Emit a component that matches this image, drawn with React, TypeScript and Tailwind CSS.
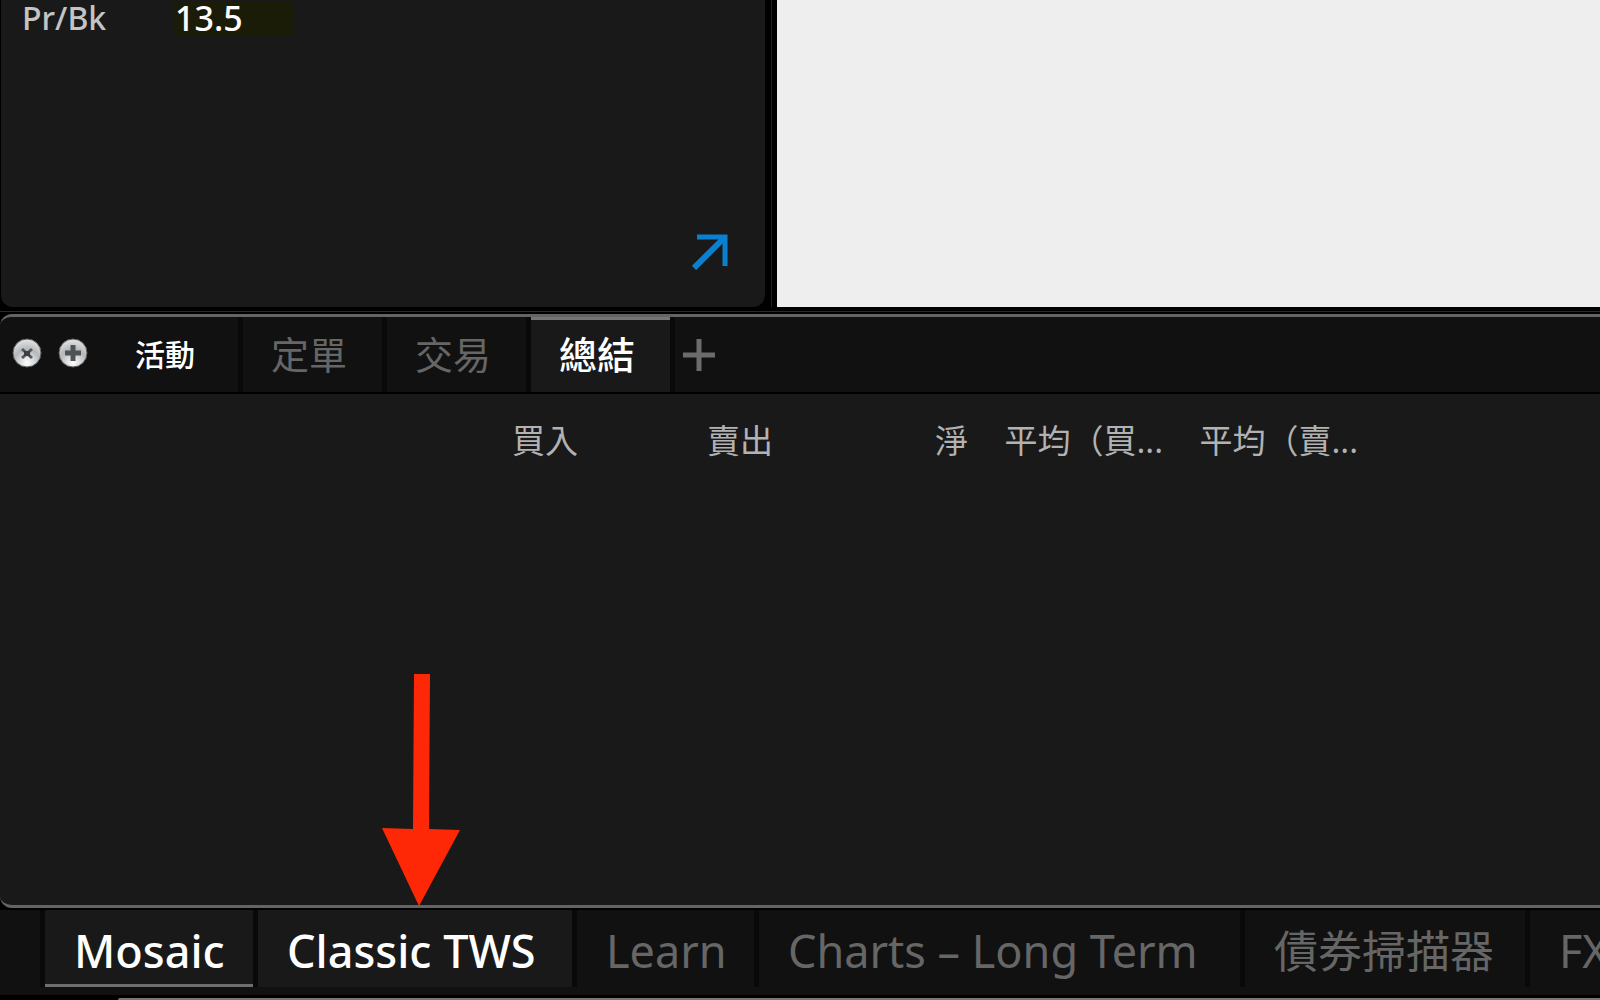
import React from "react";
import { clsx } from "clsx";

interface Tab {
  label: string;
  size?: string;
  state?: "active" | "open";
}

const activityTabs: Tab[] = [
  { label: "定單" },
  { label: "交易" },
  { label: "總結", state: "active" },
];

const layoutTabs: Tab[] = [
  { label: "Mosaic", size: "w-[213px] text-[45px]", state: "active" },
  { label: "Classic TWS", size: "w-[319px] text-[45px]", state: "open" },
  { label: "Learn", size: "w-[182px] text-[45px]" },
  { label: "Charts – Long Term", size: "w-[486px] text-[45px]" },
  { label: "債券掃描器", size: "w-[285px] text-[44px]" },
  { label: "FX", size: "w-[285px] text-[45px]" },
];

const columns = ["買入", "賣出", "淨", "平均（買...", "平均（賣..."];

export default function App() {
  return (
    <div className="flex min-h-screen flex-col overflow-hidden bg-black font-['Noto_Sans','Noto_Sans_CJK_TC',sans-serif] text-white">
      <TopPanels />
      <ActivityPanel />
      <LayoutBar />
    </div>
  );
}

function TopPanels() {
  return (
    <div className="flex h-[312px] shrink-0 border-b border-[#2a2a2a] pb-1">
      <section className="ml-px flex w-[764px] shrink-0 flex-col justify-between rounded-b-xl bg-[#191919]">
        <dl className="flex h-9 items-center pl-[21px]">
          <dt className="w-[151px] text-[32px] leading-9 font-medium text-[#c4c4c4]">Pr/Bk</dt>
          <dd className="w-[121px] bg-[#1b1c08] pl-[2px] text-[34px] leading-[34px] font-medium">13.5</dd>
        </dl>
        <button aria-label="Expand" className="mr-[37px] mb-[37px] self-end">
          <svg width="36" height="36" viewBox="0 0 36 36" fill="none" stroke="#0a80d0">
            <path d="M5 3H33V32" strokeWidth="5" />
            <path d="M2 34L32 4" strokeWidth="6" />
          </svg>
        </button>
      </section>
      <div className="mr-[5px] w-[7px] border-r border-[#1f1f1f]" />
      <section className="flex-1 bg-[#eeeeee]" />
    </div>
  );
}

function ActivityPanel() {
  return (
    <section className="-mr-4 mt-0.5 flex flex-1 flex-col overflow-hidden rounded-l-xl border-y-[3px] border-[#646464] bg-[#191919]">
      <header className="flex h-[77px] shrink-0 border-b-2 border-black bg-[#111111]">
        <div className="flex w-[238px] items-center gap-4 pb-1 pl-3">
          <button aria-label="Close">
            <PanelIcon>
              <path d="M10 11L20 20M20 11L10 20" stroke="#55585a" strokeWidth="3" />
              <path d="M12 15.5H18" stroke="#3c3e40" strokeWidth="5" />
            </PanelIcon>
          </button>
          <button aria-label="Add">
            <PanelIcon>
              <path d="M15 7V23M7 15H23" stroke="#505355" strokeWidth="5" />
            </PanelIcon>
          </button>
          <h2 className="mt-1 ml-[31px] text-[30px] leading-9 font-medium">活動</h2>
        </div>
        <nav className="flex">
          {activityTabs.map((tab) => (
            <button
              key={tab.label}
              className={clsx(
                "w-[144px] border-l-[5px] border-[#090909] pl-7 text-left text-[38px] leading-[73px]",
                tab.state === "active"
                  ? "bg-[#191919] font-medium text-white shadow-[inset_0_3px_0_#747474]"
                  : "text-[#666666]"
              )}
            >
              {tab.label}
            </button>
          ))}
          <button aria-label="Add tab" className="border-l-[5px] border-[#090909] pl-2">
            <svg width="32" height="32" viewBox="0 0 32 32" stroke="#6c6c6c" strokeWidth="5">
              <path d="M16 0V32M0 16H32" />
            </svg>
          </button>
        </nav>
      </header>

      <div className="relative flex-1">
        <table className="mt-6 w-full table-fixed text-[33px] leading-[46px] text-[#b2b2b2]">
          <thead>
            <tr>
              <th className="w-[383px]" />
              {columns.map((name) => (
                <th key={name} scope="col" className="w-[195px] text-right font-normal whitespace-nowrap">
                  {name}
                </th>
              ))}
              <th />
            </tr>
          </thead>
        </table>

        {/* Pointer to the Classic TWS tab */}
        <svg className="absolute -bottom-px left-[382px]" width="78" height="232" viewBox="0 0 78 232" fill="#ff2806">
          <path d="M32 0H48L47 155L78 156L37 232L0 154L31 155Z" />
        </svg>
      </div>
    </section>
  );
}

function LayoutBar() {
  return (
    <footer className="shrink-0 overflow-hidden pt-0.5">
      <nav className="flex h-[85px] bg-[#111111] pb-2 pl-10">
        {layoutTabs.map((tab) => (
          <button
            key={tab.label}
            className={clsx(
              "shrink-0 border-l-[5px] border-[#090909] pl-[29px] text-left leading-[82px] whitespace-nowrap",
              tab.size,
              tab.state ? "bg-[#191919] font-medium text-white" : "text-[#666666]",
              tab.state === "active" && "shadow-[inset_0_-3px_0_#6e6e6e]"
            )}
          >
            {tab.label}
          </button>
        ))}
      </nav>
      <div className="mt-[3px] ml-[118px] h-0.5 rounded-tl-full bg-[#777777]" />
    </footer>
  );
}

function PanelIcon({ children }: { children: React.ReactNode }) {
  return (
    <svg width="30" height="30" viewBox="0 0 30 30">
      <defs>
        <radialGradient id="knob" cx="0.5" cy="0.85" r="0.8">
          <stop offset="0" stopColor="#ffffff" />
          <stop offset="0.6" stopColor="#b4b8bb" />
          <stop offset="1" stopColor="#e0e0e0" />
        </radialGradient>
      </defs>
      <circle cx="15" cy="15" r="14" fill="url(#knob)" stroke="#5c5c5c" strokeWidth="1" />
      {children}
    </svg>
  );
}
